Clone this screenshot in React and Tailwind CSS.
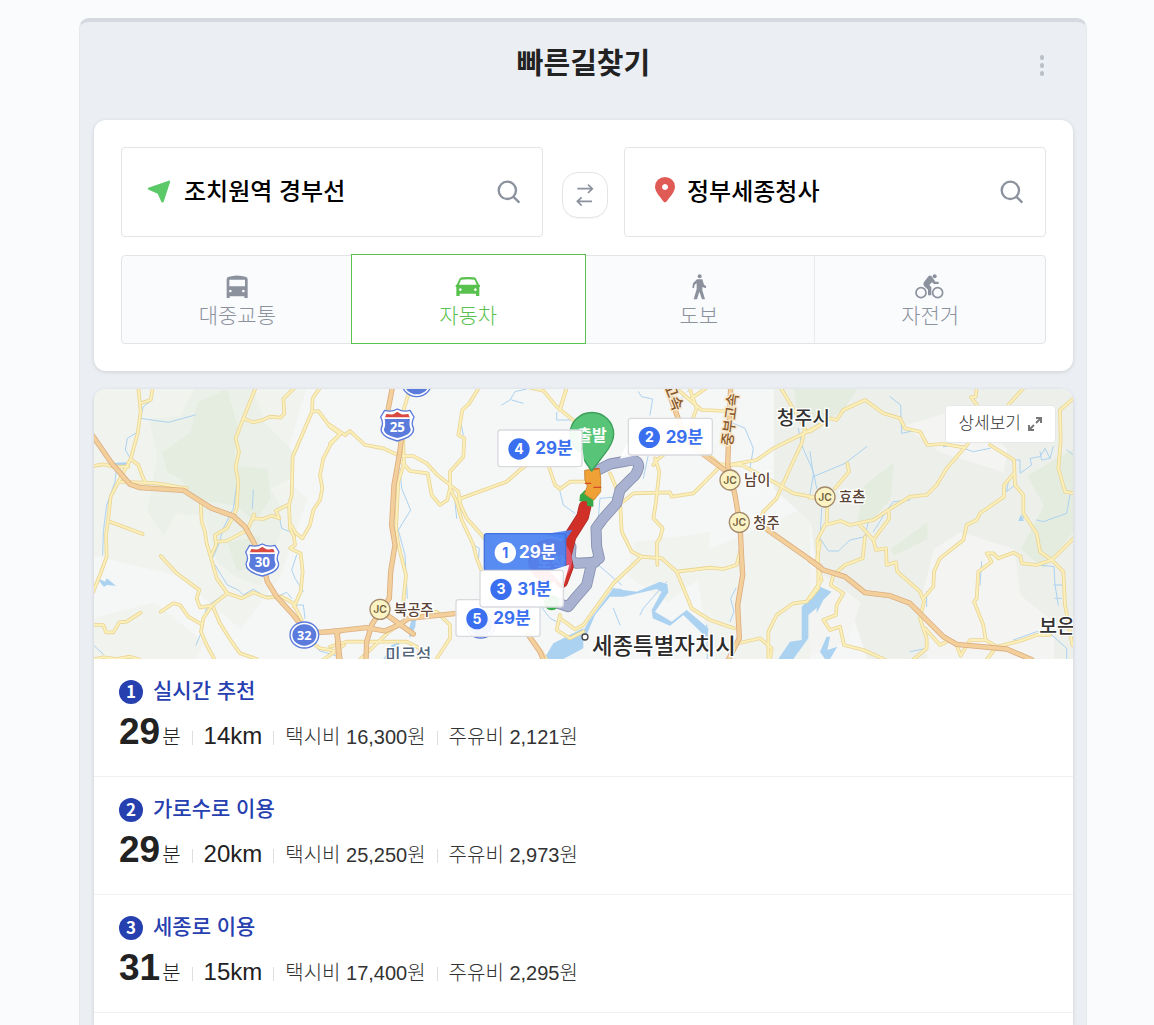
import React from "react";

/* Map artwork uses a 2937 x 810 grid; each sheet has its own origin on it. */
const SHEETS = [
  {
    origin: "translate(-12 -12)",
    minor: [
      "M145 8L152 80L143 145L122 222L85 290L62 335L55 400L48 450L50 515L30 570L8 624",
      "M152 55L182 45L188 8",
      "M8 243L40 238L70 245L115 245",
      "M122 222L145 240L156 270L165 292",
      "M60 410L158 447",
      "M497 8L460 100L437 160L447 200L437 245L445 290L440 370L430 395L410 430L375 450L378 480L362 515",
      "M460 100L490 112L515 106L540 95L572 98L583 85L580 42L614 8",
      "M690 8L668 40L666 80L608 215L605 330L597 360L600 430L612 455",
      "M666 80L685 78L720 125L750 147L722 178L700 220L690 270L697 310L690 345L670 375L660 420L637 460L618 445L600 415",
      "M332 350L335 410L345 440L350 475L362 515L380 580L412 625L455 640L490 622L530 638L575 635L610 655L635 705",
      "M380 470L410 468L472 435L493 388M487 400L520 402L545 392L568 400L557 378L597 358",
      "M612 455L615 480L600 490L632 505L638 560L632 620L612 665",
      "M88 290L200 295L290 310",
      "M212 513L260 565L328 615L320 640L330 667L365 662L412 625",
      "M212 680L250 655L270 660L295 695L333 717",
      "M365 662L340 700L333 740L350 780L374 824",
      "M370 668L390 715L425 770L450 805L500 822",
      "M8 720L40 720L48 742L70 742L88 712L110 710L152 683",
      "M8 824L40 817L80 822L120 815L150 824",
      "M645 760L690 790L740 798M762 780L700 824",
    ],
    major: [
      "M8 152L65 235L120 298L150 308L280 316L365 370L430 393L465 425L490 470L515 520L532 590L560 635L610 690L645 735L690 742L750 738",
      "M742 740L746 824",
    ],
    water: [
      "M186 45L160 65L150 100L235 112L315 90",
      "M145 140L112 160L106 195L122 222",
      "M80 245L75 290L50 360L40 440L38 510",
      "M440 300L430 370L400 430L385 480L370 515",
      "M490 315L487 370M570 405L575 430L610 445",
      "M375 540L412 600L445 615L460 630L490 612L520 632L560 635L590 622L605 640",
      "M620 510L605 555L615 580L640 620M612 660L640 660L645 700",
      "M400 630L350 665L335 740L318 780M10 780L40 808M660 770L690 798L738 812",
    ],
    lakes: ["M8 160L60 235L110 232L112 242L70 245L8 165Z", "M20 578L45 590L50 580L78 602L50 600L42 606Z"],
  },
  {
    origin: "translate(708 -12)",
    minor: [
      "M0 120L45 150L60 138L105 180L160 190L210 213L250 213L290 235L320 268L385 320L392 360L410 400L455 450L490 490",
      "M0 175L30 148",
      "M238 20L222 70L220 180L222 235L205 290L198 430L205 480L228 570L220 650",
      "M215 230L240 258L293 265L305 330L330 360L352 345L360 310L360 260L400 215L403 160L385 150L397 75L418 55L447 8",
      "M360 310L380 350L395 405L430 480L440 520L460 570",
      "M385 343L530 290L570 255L590 240",
      "M600 8L640 17L680 65L735 110M692 65L710 8",
      "M655 240L675 300L690 312L720 290L790 290",
      "M0 785L50 770L230 770L270 790L265 824",
      "M240 700L175 742L130 785L90 824",
      "M250 690L320 680L360 720L360 760L318 824",
      "M560 710L620 780L650 824M690 690L680 735L720 760L760 740",
    ],
    major: [
      "M187 8L175 70",
      "M216 150L208 210L192 300L185 420L195 480L182 560L178 640L150 680L125 720L110 770L108 824",
      "M0 740L110 728L165 738L210 718L235 700L380 685",
      "M150 675L250 747M20 740L30 824M595 750L630 800L640 824",
    ],
    water: [
      "M210 250L215 310L242 375L205 435L225 510L232 640",
      "M515 60L540 45L555 20L590 12M545 45L580 55",
      "M680 82V105H740M60 145L95 165M392 110L400 150",
      "M690 320L700 360L735 385M375 350L380 400M430 480L448 490L445 530",
      "M630 660L660 700L690 715",
    ],
    lakes: ["M245 700L258 700L256 725L240 760L235 740Z", "M160 822L185 780L210 770L190 822Z", "M642 822L670 775L760 730V790L700 822Z"],
  },
  {
    origin: "translate(1398 -12)",
    minor: [
      "M20 8L0 75",
      "M150 265L165 300L180 345L185 440L215 500L245 515L305 520L350 560L395 670L450 705L522 730",
      "M190 350L220 325L330 322L335 335L400 325L440 285L480 245L590 225L640 190L722 150L780 120",
      "M245 515L160 595L70 720L45 733L0 700",
      "M350 560L450 548L490 552L530 540L540 500",
      "M285 220L298 260L288 350L280 400L308 430L300 460L290 475L292 540",
      "M388 8L410 70L395 110L420 185L480 240",
      "M355 15L425 75L500 78M440 8L395 40",
      "M480 238L545 240L640 290L700 325L780 340",
      "M662 8L735 130L725 175L690 250L650 340L610 380L600 410",
      "M780 470L770 530L785 585L740 650L700 655L650 690L625 740L625 824",
      "M535 775L600 760L635 790L630 824",
      "M280 240L290 225L350 180",
    ],
    major: [
      "M512 8L503 240L525 330L540 420L545 520L548 570L533 660L538 760L505 824",
      "M325 20L380 170L500 260",
      "M600 415L630 440L780 545",
    ],
    water: [
      "M235 20L245 35L278 42L270 90M265 210L250 280M115 400L120 340L180 335",
      "M520 115L555 130L580 190L570 250M715 130L725 180L760 260L770 310",
      "M115 540L185 600M160 670L180 720M240 690L250 670L320 590",
      "M528 610L512 640L522 680L510 710M440 720L442 822",
    ],
    lakes: [
      "M0 780L60 755L85 710L160 610L185 612L190 635L150 635L105 690L80 750L0 800Z",
      "M150 610L230 620L300 590L322 598L325 622L285 680L335 710L380 675L445 730L442 760L370 690L330 722L278 700L275 675L305 620L290 612L190 635Z",
      "M780 610L780 660L745 690L745 760L700 822H655L690 770L725 765L725 665L745 645Z",
      "M370 30L390 15L405 8H392L355 50Z",
    ],
  },
  {
    origin: "translate(2148 -12)",
    minor: [
      "M0 140L60 100L80 105L100 75L165 45L220 85L270 100L285 130L330 140L352 180L400 177L465 188",
      "M500 8L497 35L483 37L505 65M640 10L590 65",
      "M475 175L410 250L380 300L350 330L300 335L235 375L190 405L120 420L92 408L45 420L22 465L25 540L25 610L0 640",
      "M112 235L117 260L75 310M0 338L20 338M52 365L50 415",
      "M235 375L238 400L190 465M150 420L190 465L198 495L228 490L230 540L258 532L262 560L330 620L342 650L330 700L350 760L350 790L310 824",
      "M165 455L158 520L105 540L70 570L62 600L100 625L80 660L78 690L40 705L60 735L90 725L102 780L160 795L225 824",
      "M540 180L612 225L615 300L640 330L640 385L680 445L690 500L725 525L760 560L765 660L787 780",
      "M612 265L582 300L582 335L510 385L500 405L470 420L460 465L390 520L372 560L370 605L340 640",
      "M791 40L750 75L752 170L745 250L765 320L791 325",
      "M791 460L725 525L680 540L635 535L632 515L610 503L565 520L550 505L530 505L545 530L505 560L500 640L492 650L520 720L527 765",
      "M345 730L390 780L420 765M440 780L452 812L480 765L527 765L560 785L630 768L680 750L720 750M560 785L530 824",
    ],
    major: ["M0 525L40 555L105 575L165 623L240 632L300 655L400 755L440 778L590 792L665 824"],
    water: [
      "M0 200L10 270L0 330M10 275L105 235L170 185",
      "M240 35L272 60L275 145L320 135M400 185L430 180L490 200L540 190",
      "M615 225L630 225V265L665 240L660 220L690 215L705 190L720 220L730 185M720 220L695 225L690 200",
      "M615 300L590 320L595 290M638 350L640 400M680 405L700 410L770 385L780 330",
      "M770 195L791 210M690 540L732 545L735 600L745 660M732 600H755M735 640H755",
      "M300 345L250 350L235 370L190 440M175 410L165 455L120 465L85 498L55 498L30 460L35 370",
      "M515 530L510 600M350 620L350 665M300 800L350 790M610 765L680 740L720 745L770 790V822",
    ],
    lakes: ["M0 650L30 605L65 620L40 645L20 685L20 660L0 670Z", "M30 800L50 755L60 755L52 795L82 785L60 822H45Z", "M625 408L633 388L641 408Z"],
  },
];

const GREENS = [
  ["#f1f3ef", "M-12 -12H640L560 260L640 330L560 560L440 720L250 560L0 500Z M-12 690L180 640L330 760L300 822H-12Z"],
  ["#ebf0e8", "M165 90L260 80L300 0H480L510 100L600 190L590 270L530 300L560 350L560 430L500 590L420 560L370 520L330 380L245 375L210 440L160 370L190 200Z"],
  ["#e5ede1", "M205 190L290 130L310 40L400 0L430 110L420 230L520 240L530 330L480 400L430 350L300 330L260 270L220 250ZM400 460L500 440L480 530L430 550Z"],
  ["#f1f3ef", "M1620 460L1850 430L1830 560L1720 640L1600 560ZM1800 500L2148 350V810H1850Z"],
  ["#edf0ea", "M2040 0H2937V810H2320L2270 660L2170 560L2150 400L2040 300Z"],
  ["#e3ecde", "M2100 0H2290L2250 60L2170 110L2110 80ZM2310 290L2400 220L2390 330L2330 400L2290 400ZM2390 480L2500 400L2500 450L2400 500ZM2800 260L2937 180V430L2850 540L2780 480L2850 350Z"],
  ["#f4f5f3", "M2520 480L2600 430L2760 480L2780 620L2880 700V810H2500L2480 640ZM2430 110L2600 60L2740 180L2730 250L2540 190ZM2148 530L2300 640L2260 760L2148 800Z"],
];

const KR = "Inter, 'Noto Sans CJK KR', sans-serif";

function Callout({ x, y, w = 252, h = 110, n, time, active, tail }) {
  const ink = active ? "#ffffff" : "#3a70f0";
  return (
    <g>
      <g fill={active ? "#4b83f2" : "#ffffff"} fillOpacity="0.93">
        <path d={tail} />
        <rect x={x} y={y} width={w} height={h} rx="8" stroke={active ? "#4272dc" : "#d8dade"} strokeWidth="4" />
      </g>
      <circle cx={x + 63} cy={y + 57} r="32" fill={ink} />
      <text x={x + 63} y={y + 72} textAnchor="middle" fontSize="42" fontWeight="700" fill={active ? "#3a70f0" : "#ffffff"} fontFamily="Inter">{n}</text>
      <text x={x + (active ? 104 : 112)} y={y + 73} fontSize="51" fontWeight="700" fill={ink} fontFamily={KR}>{time}</text>
    </g>
  );
}

function Junction({ x, y, name }) {
  return (
    <g>
      <circle cx={x} cy={y} r="30" fill="#fbf3c4" stroke="#a38a6a" strokeWidth="4" />
      <text x={x} y={y + 11} textAnchor="middle" fontSize="31" fontWeight="600" fill="#74603f" fontFamily="Inter">JC</text>
      <text x={x + 42} y={y + 16} fontSize="43" fontWeight="500" fill="#5b4435" stroke="#ffffff" strokeWidth="8" paintOrder="stroke" fontFamily={KR}>{name}</text>
    </g>
  );
}

function Shield({ x, y, n }) {
  return (
    <g transform={`translate(${x} ${y})`}>
      <path d="M-38 -44Q-18 -38 0 -48Q18 -38 38 -44L50 -24Q40 -4 48 8Q54 34 0 48Q-54 34 -48 8Q-40 -4 -50 -24Z" fill="#ffffff" stroke="#5b7bdc" strokeWidth="4" strokeLinejoin="round" />
      <path d="M-38 -18H38Q34 0 40 12Q42 30 0 39Q-42 30 -40 12Q-34 0 -38 -18Z" fill="#5b7bdc" />
      <path d="M-37 -23L-33 -33Q-20 -31 -12 -32L0 -40L12 -32Q20 -31 33 -33L37 -23Z" fill="#d94a43" />
      <text y="22" textAnchor="middle" fontSize="40" fontWeight="700" fill="#ffffff" fontFamily="'Noto Sans', sans-serif">{n}</text>
    </g>
  );
}

function RoundSign({ x, y, n }) {
  return (
    <g>
      <ellipse cx={x} cy={y} rx="43" ry="39" fill="#ffffff" stroke="#5b7bdc" strokeWidth="4" />
      <ellipse cx={x} cy={y} rx="36" ry="32" fill="#5b7bdc" />
      {n && <text x={x} y={y + 14} textAnchor="middle" fontSize="38" fontWeight="700" fill="#ffffff" fontFamily="'Noto Sans', sans-serif">{n}</text>}
    </g>
  );
}

function RouteMap() {
  const layer = (key, stroke, strokeWidth) =>
    SHEETS.map((s, i) => (
      <g key={key + i} transform={s.origin} fill="none" stroke={stroke} strokeWidth={strokeWidth} strokeLinejoin="round" strokeLinecap="round">
        {s[key].map((d) => <path key={d} d={d} />)}
      </g>
    ));
  return (
    <svg className="block h-[270px] w-full" viewBox="0 0 2937 810" preserveAspectRatio="xMidYMid slice" role="img" aria-label="경로 지도">
      <rect width="2937" height="810" fill="#f5f6f6" />
      {GREENS.map(([fill, d]) => <path key={d} d={d} fill={fill} />)}
      {SHEETS.map((s) => (
        <g key={s.origin} transform={s.origin} fill="#abd2f1">
          {s.lakes.map((d) => <path key={d} d={d} />)}
        </g>
      ))}
      {layer("water", "#abd2f1", 3)}
      {layer("minor", "#ead596", 11)}
      {layer("minor", "#fbefba", 6)}
      {layer("major", "#dcae80", 16)}
      {layer("major", "#f3cf9c", 11)}

      <g fontFamily={KR} paintOrder="stroke" stroke="#ffffff" strokeWidth="8">
        <text x="2048" y="108" fontSize="58" fontWeight="500" fill="#333333">청주시</text>
        <text x="1494" y="796" fontSize="67" fontWeight="500" fill="#2b2b2b">세종특별자치시</text>
        <text x="2836" y="733" fontSize="58" fontWeight="500" fill="#333333">보은</text>
        <text x="874" y="816" fontSize="50" fontWeight="500" fill="#52657d">미르섬</text>
        <text transform="translate(1708 -10) rotate(68)" fontSize="46" fontWeight="500" fill="#8a5a2c" stroke="#f8e8cc">고속</text>
        <text transform="translate(1914 172) rotate(-83)" fontSize="43" fontWeight="500" fill="#8a5a2c" stroke="#f8e8cc">중부고속</text>
      </g>
      <circle cx="1473" cy="744" r="9" fill="#ffffff" stroke="#444444" strokeWidth="4" />

      <g transform="translate(-12 -12)">
        <Shield x={517} y={525} n="30" />
        <RoundSign x={643} y={750} n="32" />
      </g>
      <g transform="translate(708 -12)">
        <Shield x={202} y={120} n="25" />
        <RoundSign x={260} y={-4} n="23" />
        <RoundSign x={452} y={720} />
        <Junction x={150} y={673} name="북공주" />
      </g>
      <g transform="translate(1398 -12)">
        <Junction x={510} y={285} name="남이" />
        <Junction x={538} y={412} name="청주" />
      </g>
      <g transform="translate(2148 -12)">
        <Junction x={45} y={336} name="효촌" />
      </g>

      <g transform="translate(1128 33)" strokeLinejoin="round" strokeLinecap="round">
        <g fill="none">
          {[["#8790ae", 33], ["#a9b2d0", 28]].map(([c, w]) => (
            <g key={c} stroke={c} strokeWidth={w}>
              <path d="M375 215L420 192L470 183Q505 175 506 200Q500 225 485 235L450 270L440 310L400 355L378 385L380 440L388 475L365 490L350 555L315 595L295 620L250 605" />
              <path d="M375 487L320 490L300 480L303 440" />
            </g>
          ))}
          <path d="M345 320L338 350L300 410L285 470L292 500L275 545" stroke="#a92b28" strokeWidth="38" />
          <path d="M345 320L338 350L300 410L285 470L292 500L275 545" stroke="#d03028" strokeWidth="34" />
        </g>
        <path d="M330 285L345 270L358 274L370 285L370 320L352 318L350 304L328 304Z" fill="#38a845" />
        <path d="M345 211L388 205L392 235V275L372 300L358 292L344 282L352 258L345 240Z" fill="#efa136" stroke="#cc8a32" strokeWidth="3" />
        <path d="M346 250H362M372 262H392M368 208L385 206" fill="none" stroke="#d2492b" strokeWidth="4" />
        <circle cx="240" cy="482" r="66" fill="#e0516a" />
        <circle cx="245" cy="608" r="23" fill="#34ac4a" />
        <path d="M365 213L322 150Q300 122 300 102A65 64 0 0 1 431 102Q431 122 414 148Z" fill="#57c478" stroke="#3c9f5a" strokeWidth="4" />
        <text x="322" y="122" fontSize="48" fontWeight="700" fill="#ffffff" fontFamily={KR}>출발</text>
        <text x="202" y="504" fontSize="46" fontWeight="700" fill="#ffffff" fontFamily={KR}>도착</text>
        <Callout x={84} y={90} n="4" time="29분" tail="M290 196L346 210L338 150Z" />
        <Callout x={475} y={55} n="2" time="29분" tail="M475 120L450 176L505 164Z" />
        <Callout x={-42} y={599} n="5" time="29분" tail="M120 600L180 580L190 600Z" />
        <Callout x={43} y={401} w={244} n="1" time="29분" active tail="M225 402L308 389L287 420Z" />
        <Callout x={30} y={511} w={250} n="3" time="31분" tail="M240 512L298 494L280 560Z" />
      </g>
    </svg>
  );
}

function BusIcon() {
  return (
    <svg className="h-7 w-8" viewBox="394 98 96 84" fill="currentColor" fillRule="evenodd">
      <path d="M411 117Q411 110 418 109L429 107Q442 104 456 107L467 109Q474 110 474 117V173H464V168H420V173H411ZM419 118V138H466V118ZM422 148a4 4 0 1 0 .1 0ZM461 148a4 4 0 1 0 .1 0Z" />
    </svg>
  );
}
function CarIcon() {
  return (
    <svg className="h-7 w-8" viewBox="1084 98 96 84" fill="currentColor" fillRule="evenodd">
      <path d="M1105 118Q1107 112 1113 111Q1131 109 1150 111Q1156 112 1158 118L1164 132L1168 135V140H1166V167H1156V160H1107V167H1097V140H1095V135L1099 132ZM1111 118L1105 133H1158L1152 118Q1131 115 1111 118ZM1109 144a4 4 0 1 0 .1 0ZM1154 144a4 4 0 1 0 .1 0Z" />
    </svg>
  );
}
function WalkIcon() {
  return (
    <svg className="h-7 w-8" viewBox="308 98 96 84" fill="currentColor">
      <circle cx="358" cy="108" r="6" />
      <path d="M350 117H366L371 133L378 138L376 144L366 140V150L374 177H365L357 154L350 177H340L349 146V129L343 133L341 144L336 142L338 129Z" />
    </svg>
  );
}
function BikeIcon() {
  return (
    <svg className="h-7 w-8" viewBox="1000 98 96 84" fill="currentColor">
      <g fill="none" stroke="currentColor" strokeWidth="5">
        <circle cx="1021" cy="157" r="15" />
        <circle cx="1071" cy="157" r="15" />
      </g>
      <circle cx="1062" cy="108" r="6" />
      <path d="M1030 125L1044 107Q1048 104 1052 107L1056 112L1064 124H1074V131H1060L1054 126L1046 134L1052 141V165H1042V148L1030 137Q1026 131 1030 125Z" />
    </svg>
  );
}
function StartIcon() {
  return (
    <svg className="size-6" viewBox="226 541 72 72" fill="#5bc968" overflow="visible">
      <path d="M227 564L288 543Q294 542 292 548L273 606Q270 611 266 606L255 582L228 570Q223 567 227 564Z" />
    </svg>
  );
}
function GoalIcon() {
  return (
    <svg className="h-8 w-6" viewBox="308 528 72 96" fill="#e15b56" fillRule="evenodd" overflow="visible">
      <path d="M350 607Q346 607 337 593Q320 574 320 560A30 29 0 0 1 380 560Q380 574 363 593Q354 607 350 607ZM350 552a9 9 0 1 0 .1 0Z" />
    </svg>
  );
}
function SearchIcon() {
  return (
    <svg className="size-6" viewBox="1239 540 72 72" fill="none" stroke="#8b929e" strokeWidth="7">
      <circle cx="1270" cy="571" r="26" />
      <path d="M1288 590L1306 608" />
    </svg>
  );
}

function PlaceBox({ label, value, icon }) {
  return (
    <div className="flex h-[90px] min-w-0 flex-1 items-center rounded border border-[#e2e5e8] pr-[21px] pl-[26px]">
      {icon}
      <input aria-label={label} defaultValue={value} className="ml-3 h-10 min-w-0 flex-1 bg-transparent pb-[6px] text-2xl font-medium text-black outline-none" />
      <button type="button" aria-label={`${label} 검색`}><SearchIcon /></button>
    </div>
  );
}

const MODES = [
  { name: "대중교통", Icon: BusIcon },
  { name: "자동차", Icon: CarIcon, active: true },
  { name: "도보", Icon: WalkIcon },
  { name: "자전거", Icon: BikeIcon },
];

const ROUTES = [
  { title: "실시간 추천", min: 29, km: 14, taxi: "16,300", fuel: "2,121" },
  { title: "가로수로 이용", min: 29, km: 20, taxi: "25,250", fuel: "2,973" },
  { title: "세종로 이용", min: 31, km: 15, taxi: "17,400", fuel: "2,295" },
];

const Bar = () => <span className="mx-[11px] mt-[22px] h-[14px] w-px self-start bg-[#dcdee0]" />;

export default function App() {
  return (
    <div className="flex min-h-screen flex-col bg-[#fafbfd] pt-[18px] pr-[67px] pl-[79px] font-['Liberation_Sans','Noto_Sans_CJK_KR',sans-serif] text-[#222]">
      <main className="flex flex-1 flex-col rounded-t-[10px] border-x border-t-4 border-x-[#e6e9ec] border-t-[#d6d9df] bg-[#ebeef2] pr-[13px] pl-[14px]">
        <header className="grid h-[98px] grid-cols-[1fr_auto_1fr] items-start pt-[21px]">
          <h1 className="col-start-2 text-[29px] leading-[42px] font-bold">빠른길찾기</h1>
          <button type="button" aria-label="더보기" className="mt-[10px] mr-[23px] flex h-6 w-4 flex-col items-center justify-center gap-[3px] justify-self-end">
            <span className="h-[5px] w-1 rounded-full bg-[#babec6]" />
            <span className="h-[5px] w-1 rounded-full bg-[#babec6]" />
            <span className="h-[5px] w-1 rounded-full bg-[#babec6]" />
          </button>
        </header>

        <section className="rounded-xl bg-white p-[27px] shadow-[0_1px_4px_rgba(0,0,0,0.13)]">
          <div className="flex items-center">
            <PlaceBox label="출발지" value="조치원역 경부선" icon={<StartIcon />} />
            <button type="button" aria-label="출발지와 도착지 바꾸기" className="mt-[6px] mr-4 ml-[19px] flex size-[46px] items-center justify-center rounded-2xl border border-[#e2e4e6] shadow-[0_1px_1px_rgba(0,0,0,0.04)]">
              <svg className="size-6" viewBox="1459 549 72 72" fill="none" stroke="#8b929e" strokeWidth="5">
                <path d="M1472 566H1516M1504 554L1517 566L1504 579M1516 604H1472M1485 592L1472 604L1485 617" />
              </svg>
            </button>
            <PlaceBox label="도착지" value="정부세종청사" icon={<GoalIcon />} />
          </div>
          <div className="mt-[18px] grid h-[89px] grid-cols-4 rounded border border-[#e2e5e8] bg-[#fafbfd]">
            {MODES.map(({ name, Icon, active }, i) => (
              <button
                key={name}
                type="button"
                aria-pressed={!!active}
                className={
                  active
                    ? "relative -mx-[2px] -mt-[2px] -mb-px flex flex-col items-center border border-[#59c24e] bg-white pt-[18px] text-[#59c24e]"
                    : i === 3
                      ? "flex flex-col items-center border-l border-[#e9ebee] pt-[17px] text-[#8b929e]"
                      : "flex flex-col items-center pt-[17px] text-[#8b929e]"
                }
              >
                <Icon />
                <span className="text-[21px] leading-[30px] font-light">{name}</span>
              </button>
            ))}
          </div>
        </section>

        <section className="mt-[18px] flex-1 rounded-t-xl bg-white shadow-[0_1px_4px_rgba(0,0,0,0.13)]">
          <div className="relative overflow-hidden rounded-t-xl">
            <RouteMap />
            <button type="button" className="absolute top-4 right-[17px] flex h-[38px] items-center gap-1 rounded-sm border border-[#e6e8e8] bg-white pr-[10px] pl-3 text-[17px] font-light text-[#333]">
              상세보기
              <svg className="size-5" viewBox="0 0 20 20" fill="none" stroke="#777" strokeWidth="2">
                <path d="M11 4H16V9M16 4L11 9M9 16H4V11M4 16L9 11" />
              </svg>
            </button>
          </div>
          <ol>
            {ROUTES.map((r, i) => (
              <li key={r.title} className="h-[118px] border-b border-[#f0f1f3] pt-[17px] pl-[25px]">
                <h2 className="flex h-[30px] items-center gap-[10px] text-[21px] font-bold text-[#2740b0]">
                  <span className="mt-px flex size-6 justify-center rounded-full bg-[#2740b0] font-['Noto_Sans_CJK_KR'] text-[17px] leading-[22px] text-white">{i + 1}</span>
                  <span className="leading-[30px] font-medium">{r.title}</span>
                </h2>
                <div className="mt-[3px] flex h-[46px] items-baseline text-xl leading-[46px] font-light text-[#333]">
                  <strong className="text-[37px] font-bold text-[#222]">{r.min}</strong>
                  <span className="ml-[2px] text-[#222]">분</span>
                  <Bar />
                  <span className="text-2xl text-[#222]">{r.km}km</span>
                  <Bar />
                  <span>택시비 {r.taxi}원</span>
                  <Bar />
                  <span>주유비 {r.fuel}원</span>
                </div>
              </li>
            ))}
          </ol>
        </section>
      </main>
    </div>
  );
}
